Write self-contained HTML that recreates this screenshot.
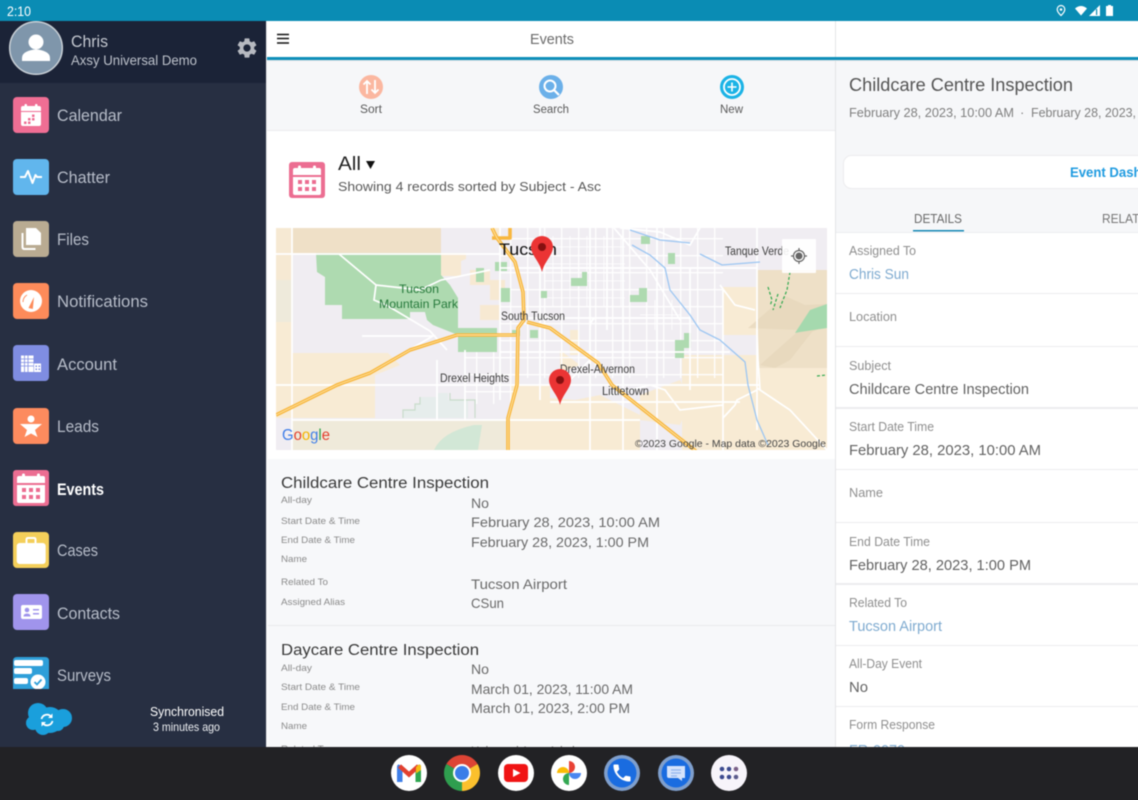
<!DOCTYPE html>
<html lang="en"><head><meta charset="utf-8"><title>Events</title>
<style>
html,body{margin:0;padding:0;width:1138px;height:800px;overflow:hidden;background:#fff}
#w{position:relative;width:1138px;height:800px;overflow:hidden}
svg{display:block;position:absolute;left:-4px;top:-4px;filter:blur(.4px)}
text{font-family:"Liberation Sans",sans-serif;white-space:pre}
.m{font-size:17px;fill:#b6bcc8}
.lb{font-size:13px;fill:#8f8f8f}
.v{font-size:15px;fill:#636363}
.lk{font-size:15px;fill:#7fabd0}
.sl{font-size:9.5px;fill:#8a8a8a}
.sv{font-size:14px;fill:#6a6a6a}
.st{font-size:15.5px;fill:#3a3a3a}
.g{font-size:11.5px;fill:#3c3c3c}
.r{fill:none;stroke:#fff}
</style></head><body><div id="w">
<svg width="1146" height="808" viewBox="-4 -4 1146 808" xmlns="http://www.w3.org/2000/svg">
<defs>
<clipPath id="mc"><rect x="276" y="228" width="551" height="222"/></clipPath>
<pattern id="grid" width="17" height="17" patternUnits="userSpaceOnUse"><path d="M0 .6H17M.6 0V17" stroke="#fff" stroke-width="1.300" fill="none"/></pattern>
<pattern id="fine" width="8.500" height="8.500" patternUnits="userSpaceOnUse"><path d="M0 .4H8.500M.4 0V8.500" stroke="#fff" stroke-width=".8" fill="none"/></pattern>
<g id="cal"><rect width="36" height="36" rx="3" fill="#ec6e92"/><path d="M4 13V8q0-2 2-2h24q2 0 2 2v5z" fill="#fff"/><rect x="9" y="3.500" width="3" height="4" rx="1.500" fill="#fff"/><rect x="24" y="3.500" width="3" height="4" rx="1.500" fill="#fff"/><path d="M4 15h28v16q0 2-2 2H6q-2 0-2-2z" fill="#fff"/><g fill="#ec6e92"><rect x="9" y="18" width="4" height="4"/><rect x="16" y="18" width="4" height="4"/><rect x="23" y="18" width="4" height="4"/><rect x="9" y="25" width="4" height="4"/><rect x="16" y="25" width="4" height="4"/><rect x="23" y="25" width="4" height="4"/></g></g>
</defs>

<!-- main backgrounds -->
<rect x="-4" y="-4" width="1146" height="808" fill="#fff"/>
<rect x="267" y="60" width="568" height="70" fill="#f6f7f9"/>
<rect x="267" y="130" width="568" height="1" fill="#ebecee"/>
<rect x="836" y="60" width="306" height="172" fill="#f6f7f9"/>
<rect x="835" y="21" width="1" height="726" fill="#e4e5e7"/>
<rect x="267" y="57" width="875" height="3" fill="#0f8fb9"/>
<rect x="267" y="60" width="875" height="1" fill="#dfe3e6"/>

<!-- header -->
<path d="M277 34.500h12M277 38.500h12M277 43h12" stroke="#111" stroke-width="1.600"/>
<text x="530" y="44" font-size="15" fill="#6b6b6b" textLength="44" lengthAdjust="spacingAndGlyphs">Events</text>

<!-- toolbar -->
<circle cx="371" cy="87" r="12" fill="#fbb7a0"/>
<path d="M367 94V81M363.500 84.500L367 81l3.500 3.500M375 80v13M371.500 89.500L375 93l3.500-3.500" stroke="#fff" stroke-width="1.800" fill="none"/>
<circle cx="551" cy="87" r="12" fill="#6bb0e9"/>
<circle cx="550" cy="86" r="5.500" fill="none" stroke="#fff" stroke-width="2"/><path d="M554 90l5 5" stroke="#fff" stroke-width="2.200"/>
<circle cx="732" cy="87" r="12" fill="#1bb3e6"/>
<circle cx="732" cy="87" r="8" fill="none" stroke="#fff" stroke-width="1.800"/><path d="M732 82.500v9M727.500 87h9" stroke="#fff" stroke-width="1.600"/>
<text x="360" y="113" font-size="11.500" fill="#5a5a5a" textLength="22" lengthAdjust="spacingAndGlyphs">Sort</text>
<text x="533" y="113" font-size="11.500" fill="#5a5a5a" textLength="36" lengthAdjust="spacingAndGlyphs">Search</text>
<text x="720" y="113" font-size="11.500" fill="#5a5a5a" textLength="23" lengthAdjust="spacingAndGlyphs">New</text>

<!-- list header -->
<use href="#cal" x="289" y="162"/>
<text x="338" y="170" font-size="19" fill="#222" textLength="23" lengthAdjust="spacingAndGlyphs">All</text>
<path d="M366 161h9l-4.500 8z" fill="#111"/>
<text x="338" y="191" font-size="13" fill="#5a5a5a" textLength="263" lengthAdjust="spacingAndGlyphs">Showing 4 records sorted by Subject - Asc</text>

<!-- map -->
<g clip-path="url(#mc)">
<rect x="276" y="228" width="551" height="222" fill="#f0edf2"/>
<rect x="276" y="228" width="16" height="52" fill="#f6e9d3"/>
<rect x="276" y="280" width="16" height="42" fill="#eeeadb"/>
<rect x="276" y="322" width="16" height="96" fill="#f8ebd4"/>
<rect x="292" y="228" width="149" height="25" fill="#efe0c7"/>
<path d="M292 353H388L400 365 375 375V418H292z" fill="#f8ebd4"/>
<rect x="276" y="418" width="16" height="32" fill="#f0edf2"/>
<rect x="292" y="420" width="191" height="30" fill="#efeada"/>
<path d="M483 420H510V450H483z" fill="#efeada"/>
<path d="M434 450q8-18 40-25l8 0-4 25z" fill="#d2e7d6"/>
<path d="M403 418v-8h12v-6h5v-7h18v-4h10v7h20v18z" fill="#e6edec"/>
<path d="M292 420H483M292 420V450M403 418v-8h12v-6h5v-7M450 393v7h25v18" fill="none" stroke="#c9dccb" stroke-width="1.200"/>
<path d="M441 253h25v6l-5 2v15h-20zM470 270h20v15h-20zM480 305h20v15h-20zM441 260l-20 3v10h20z" fill="#f7e9d2"/>
<path d="M490 280h15v20h-15zM492 228h8v8h-8z" fill="#f7e9d2"/>
<path d="M316 253H441V275L450 285 458 298V328H497V352H458V335L433 325 427 320 425 312H410V319H342V305H325V277L317 272z" fill="#aedab0"/>
<path d="M757 270H827V368H757z" fill="#eee0c7"/>
<path d="M723 287H757V335H723zM757 368H827V450H757zM682 355H757V450H682z" fill="#f8ebd4"/>
<path d="M550 398L575 400 600 395 640 415V450H550zM510 385H550V450H510zM640 395L680 380 690 400 680 425 640 420zM560 350l20 15-20 8zM570 330h8v25h-8z" fill="#f8ebd4"/>
<path d="M795 334L827 304V325L812 332 790 360 775 368 760 365zM748 328L785 296 805 305 827 304 827 325 800 330z" fill="#e6d5ba" opacity=".7"/>
<path d="M795 333L810 310 827 304V328L800 332z" fill="#a5d9ae"/>
<!-- grid city -->
<rect x="500" y="228" width="223" height="150" fill="url(#grid)"/>
<rect x="545" y="236" width="80" height="70" fill="url(#fine)"/>
<rect x="465" y="352" width="50" height="52" fill="url(#grid)"/>
<rect x="640" y="300" width="40" height="30" fill="url(#fine)"/>
<!-- parks over grid -->
<path d="M495 262h12v9h-12zM476 268h8v14h-8zM500 288h10v14h-10zM630 295h9v-7h8v14h-17zM668 253h7v11h-7zM641 236h9v8h-9zM675 340h9v-7h7v15h-7v10h-9zM540 291h7v7h-7zM571 286h16v-14h-5v6h-11zM530 338h8v-8h-8zM512 330h8v6h-8z" fill="#aedab0"/>
<!-- major streets -->
<g class="r" stroke-width="1.700">
<path d="M292 228V450M276 254H500M276 385H760M316 385H517M292 420H640"/>
<path d="M500 268H757M517 318H690M500 352H730M550 402H740"/>
<path d="M590 228V450M607 228V330M623 228V450M657 228V450M690 268V390M723 290V450M757 228V430"/>
<path d="M540 228V400M500 228V400M465 350V420M437 360V420"/>
<path d="M339 254L376 285 374 300 388 306 430 331 447 350M376 285L420 290 441 280 490 270M362 336H433L392 360"/>
<path d="M597 318Q590 318 590 330M757 390L737 400 735 405 723 418M757 388L790 410 827 450M610 395L650 385 665 390 680 410 723 405"/>
<path d="M700 228L690 245 660 232 620 228M560 390L590 360M757 330L758 360 760 390"/>
<path d="M614 228L650 270 680 320M720 285L735 305 755 310"/>
</g>
<!-- water -->
<g fill="none" stroke="#9cc6f2" stroke-width="1.300">
<path d="M630 230L660 240 690 243M632 245L650 255 665 268 670 290 690 315 700 330 720 340 745 362 748 385 757 420 768 445"/>
<path d="M700 254L722 265 760 262"/>
</g>
<g fill="none" stroke="#2fa84f" stroke-width="1.200" stroke-dasharray="3 2"><path d="M790 272L787 290 783 300 780 308M768 287L772 300 770 306M778 294L773 310M817 376L827 375"/></g>
<!-- highways -->
<g fill="none" stroke-linejoin="round">
<g stroke="#f8b73f" stroke-width="3.600">
<path d="M276 415L337 385 370 373 410 350 457 335 516 335"/>
<path d="M492 228L497 238 515 262 523 292 524 320 518 328 517 385 508 418 508 450"/>
<path d="M510 228V238L492 238"/>
<path d="M527 322L550 328 598 363 612 385 697 452"/>
</g>
<g stroke="#fde3a6" stroke-width=".9">
<path d="M276 415L337 385 370 373 410 350 457 335 516 335"/>
<path d="M492 228L497 238 515 262 523 292 524 320 518 328 517 385 508 418 508 450"/>
<path d="M527 322L550 328 598 363 612 385 697 452"/>
</g>
</g>
<!-- labels -->
<text x="499" y="255" font-size="17" fill="#111" textLength="58" lengthAdjust="spacingAndGlyphs">Tucson</text>
<text x="399" y="293" font-size="12" fill="#277a3c" textLength="40" lengthAdjust="spacingAndGlyphs">Tucson</text>
<text x="379" y="308" font-size="12" fill="#277a3c" textLength="79" lengthAdjust="spacingAndGlyphs">Mountain Park</text>
<text class="g" x="501" y="320" textLength="64" lengthAdjust="spacingAndGlyphs">South Tucson</text>
<text class="g" x="440" y="382" textLength="69" lengthAdjust="spacingAndGlyphs">Drexel Heights</text>
<text class="g" x="560" y="373" textLength="75" lengthAdjust="spacingAndGlyphs">Drexel-Alvernon</text>
<text class="g" x="602" y="395" textLength="47" lengthAdjust="spacingAndGlyphs">Littletown</text>
<text class="g" x="725" y="255" textLength="64" lengthAdjust="spacingAndGlyphs">Tanque Verde</text>
<text x="635" y="447" font-size="10.500" fill="#444" textLength="191" lengthAdjust="spacingAndGlyphs">©2023 Google - Map data ©2023 Google</text>
<text x="282" y="440" font-size="15.500" textLength="48" lengthAdjust="spacingAndGlyphs"><tspan fill="#3f7ee8">G</tspan><tspan fill="#e3402f">o</tspan><tspan fill="#f5b400">o</tspan><tspan fill="#3f7ee8">g</tspan><tspan fill="#2ca24c">l</tspan><tspan fill="#e3402f">e</tspan></text>
<!-- locate btn -->
<rect x="782" y="239" width="34" height="34" rx="1" fill="#fff" opacity=".9"/>
<circle cx="799" cy="256" r="5.500" fill="none" stroke="#666" stroke-width="1.200"/><circle cx="799" cy="256" r="3.500" fill="#666"/>
<path d="M799 248v3M799 261v3M791 256h3M804 256h3" stroke="#666" stroke-width="1.200"/>
<!-- pins -->
<path d="M542 272C540 262 531 255 531 247A11 11 0 0 1 553 247C553 255 544 262 542 272Z" fill="#eb3434"/><circle cx="542" cy="247" r="4" fill="#861010"/>
<path d="M560 405C558 395 549 388 549 380A11 11 0 0 1 571 380C571 388 562 395 560 405Z" fill="#eb3434"/><circle cx="560" cy="380" r="4" fill="#861010"/>
</g>

<!-- list items -->
<rect x="268" y="459" width="567" height="288" fill="#f7f8fa"/>
<rect x="268" y="625" width="567" height="1" fill="#e9eaec"/>
<text class="st" x="281" y="488" textLength="208" lengthAdjust="spacingAndGlyphs">Childcare Centre Inspection</text>
<text class="sl" x="281" y="503" textLength="31" lengthAdjust="spacingAndGlyphs">All-day</text>
<text class="sl" x="281" y="524" textLength="79" lengthAdjust="spacingAndGlyphs">Start Date &amp; Time</text>
<text class="sl" x="281" y="543" textLength="74" lengthAdjust="spacingAndGlyphs">End Date &amp; Time</text>
<text class="sl" x="281" y="562" textLength="26" lengthAdjust="spacingAndGlyphs">Name</text>
<text class="sl" x="281" y="585" textLength="47" lengthAdjust="spacingAndGlyphs">Related To</text>
<text class="sl" x="281" y="605" textLength="64" lengthAdjust="spacingAndGlyphs">Assigned Alias</text>
<text class="sv" x="471" y="508" textLength="18" lengthAdjust="spacingAndGlyphs">No</text>
<text class="sv" x="471" y="527" textLength="189" lengthAdjust="spacingAndGlyphs">February 28, 2023, 10:00 AM</text>
<text class="sv" x="471" y="547" textLength="178" lengthAdjust="spacingAndGlyphs">February 28, 2023, 1:00 PM</text>
<text class="sv" x="471" y="589" textLength="96" lengthAdjust="spacingAndGlyphs">Tucson Airport</text>
<text class="sv" x="471" y="608" textLength="33" lengthAdjust="spacingAndGlyphs">CSun</text>
<text class="st" x="281" y="655" textLength="198" lengthAdjust="spacingAndGlyphs">Daycare Centre Inspection</text>
<text class="sl" x="281" y="671" textLength="31" lengthAdjust="spacingAndGlyphs">All-day</text>
<text class="sl" x="281" y="690" textLength="79" lengthAdjust="spacingAndGlyphs">Start Date &amp; Time</text>
<text class="sl" x="281" y="710" textLength="74" lengthAdjust="spacingAndGlyphs">End Date &amp; Time</text>
<text class="sl" x="281" y="729" textLength="26" lengthAdjust="spacingAndGlyphs">Name</text>
<text class="sl" x="281" y="752" textLength="47" lengthAdjust="spacingAndGlyphs">Related To</text>
<text class="sv" x="471" y="674" textLength="18" lengthAdjust="spacingAndGlyphs">No</text>
<text class="sv" x="471" y="694" textLength="162" lengthAdjust="spacingAndGlyphs">March 01, 2023, 11:00 AM</text>
<text class="sv" x="471" y="713" textLength="159" lengthAdjust="spacingAndGlyphs">March 01, 2023, 2:00 PM</text>
<text class="sv" x="471" y="756" textLength="110" lengthAdjust="spacingAndGlyphs">Universal Axsy Admin</text>

<!-- right panel -->
<text x="849" y="91" font-size="18" fill="#555" textLength="224" lengthAdjust="spacingAndGlyphs">Childcare Centre Inspection</text>
<text x="849" y="117" font-size="13" fill="#808080" textLength="165" lengthAdjust="spacingAndGlyphs">February 28, 2023, 10:00 AM</text>
<text x="1020" y="117" font-size="13" fill="#808080">·</text>
<text x="1031" y="117" font-size="13" fill="#808080" textLength="105" lengthAdjust="spacingAndGlyphs">February 28, 2023,</text>
<rect x="843.500" y="155.500" width="310" height="33" rx="8" fill="#fff" stroke="#ececee"/>
<text x="1070" y="177" font-size="14" font-weight="bold" fill="#1f9be0" textLength="108" lengthAdjust="spacingAndGlyphs">Event Dashboard</text>
<text x="914" y="223" font-size="13" fill="#6a6a6a" textLength="48" lengthAdjust="spacingAndGlyphs">DETAILS</text>
<text x="1102" y="223" font-size="13" fill="#777" textLength="54" lengthAdjust="spacingAndGlyphs">RELATED</text>
<rect x="913" y="230" width="51" height="1.500" fill="#1689b6"/>
<rect x="836" y="232" width="306" height="1" fill="#eceef0"/>
<g fill="#ececee">
<rect x="836" y="293" width="306" height="1"/><rect x="836" y="346" width="306" height="1"/><rect x="836" y="407" width="306" height="2"/><rect x="836" y="469" width="306" height="1"/><rect x="836" y="522" width="306" height="1"/><rect x="836" y="583" width="306" height="2"/><rect x="836" y="645" width="306" height="1"/><rect x="836" y="706" width="306" height="1"/>
</g>
<text class="lb" x="849" y="255" textLength="67" lengthAdjust="spacingAndGlyphs">Assigned To</text>
<text class="lk" x="849" y="279" textLength="60" lengthAdjust="spacingAndGlyphs">Chris Sun</text>
<text class="lb" x="849" y="321" textLength="48" lengthAdjust="spacingAndGlyphs">Location</text>
<text class="lb" x="849" y="370" textLength="42" lengthAdjust="spacingAndGlyphs">Subject</text>
<text class="v" x="849" y="394" textLength="180" lengthAdjust="spacingAndGlyphs">Childcare Centre Inspection</text>
<text class="lb" x="849" y="431" textLength="85" lengthAdjust="spacingAndGlyphs">Start Date Time</text>
<text class="v" x="849" y="455" textLength="192" lengthAdjust="spacingAndGlyphs">February 28, 2023, 10:00 AM</text>
<text class="lb" x="849" y="497" textLength="34" lengthAdjust="spacingAndGlyphs">Name</text>
<text class="lb" x="849" y="546" textLength="81" lengthAdjust="spacingAndGlyphs">End Date Time</text>
<text class="v" x="849" y="570" textLength="182" lengthAdjust="spacingAndGlyphs">February 28, 2023, 1:00 PM</text>
<text class="lb" x="849" y="607" textLength="58" lengthAdjust="spacingAndGlyphs">Related To</text>
<text class="lk" x="849" y="631" textLength="93" lengthAdjust="spacingAndGlyphs">Tucson Airport</text>
<text class="lb" x="849" y="668" textLength="73" lengthAdjust="spacingAndGlyphs">All-Day Event</text>
<text class="v" x="849" y="692" textLength="19" lengthAdjust="spacingAndGlyphs">No</text>
<text class="lb" x="849" y="729" textLength="86" lengthAdjust="spacingAndGlyphs">Form Response</text>
<text class="lk" x="849" y="755" textLength="56" lengthAdjust="spacingAndGlyphs">FR-0070</text>

<!-- sidebar -->
<rect x="-4" y="21" width="270" height="726" fill="#272f42"/>
<rect x="-4" y="21" width="270" height="62" fill="#1b2337"/>
<circle cx="36" cy="48" r="26.300" fill="#7f96ab" stroke="#c9d0d6" stroke-width="1.500"/>
<circle cx="36" cy="42" r="7.500" fill="#fff"/><path d="M22 61v-3q0-4 4-6 5-2.500 10-2.500t10 2.500q4 2 4 6v3z" fill="#fff"/>
<text x="71" y="47" font-size="17" fill="#c4c8d0" textLength="37" lengthAdjust="spacingAndGlyphs">Chris</text>
<text x="71" y="65" font-size="14" fill="#bcc1ca" textLength="126" lengthAdjust="spacingAndGlyphs">Axsy Universal Demo</text>
<path transform="translate(235 36)" fill="#b6b9c0" fill-rule="evenodd" d="M19.14 12.94c.04-.3.06-.61.06-.94 0-.32-.02-.64-.07-.94l2.03-1.58c.18-.14.23-.41.12-.61l-1.92-3.32c-.12-.22-.37-.29-.59-.22l-2.39.96c-.5-.38-1.03-.7-1.62-.94l-.36-2.54c-.04-.24-.24-.41-.48-.41h-3.84c-.24 0-.43.17-.47.41l-.36 2.54c-.59.24-1.13.57-1.62.94l-2.39-.96c-.22-.08-.47 0-.59.22L2.74 8.87c-.12.21-.08.47.12.61l2.03 1.58c-.05.3-.09.63-.09.94s.02.64.07.94l-2.03 1.58c-.18.14-.23.41-.12.61l1.92 3.32c.12.22.37.29.59.22l2.39-.96c.5.38 1.03.7 1.62.94l.36 2.54c.05.24.24.41.48.41h3.84c.24 0 .44-.17.47-.41l.36-2.54c.59-.24 1.13-.56 1.62-.94l2.39.96c.22.08.47 0 .59-.22l1.92-3.32c.12-.22.07-.47-.12-.61l-2.01-1.58zM12 15.6c-1.98 0-3.6-1.62-3.6-3.6s1.62-3.6 3.6-3.6 3.6 1.62 3.6 3.6-1.62 3.6-3.6 3.6z"/>

<!-- Calendar -->
<g transform="translate(13 97)"><rect width="36" height="36" rx="4" fill="#ef6e94"/>
<path d="M8 14v-3q0-2 2-2h16q2 0 2 2v3z" fill="#fff"/><rect x="11.500" y="7" width="2.500" height="4" rx="1" fill="#fff"/><rect x="22" y="7" width="2.500" height="4" rx="1" fill="#fff"/><path d="M8 15h20v12q0 2-2 2H10q-2 0-2-2z" fill="#fff"/>
<g fill="#ef6e94"><rect x="19" y="17.500" width="2.500" height="2.500"/><rect x="15" y="21" width="2.500" height="2.500"/><rect x="19" y="21" width="2.500" height="2.500"/><rect x="11" y="24.500" width="2.500" height="2.500"/><rect x="15" y="24.500" width="2.500" height="2.500"/></g></g>
<text class="m" x="57" y="121" textLength="65" lengthAdjust="spacingAndGlyphs">Calendar</text>
<!-- Chatter -->
<g transform="translate(13 159)"><rect width="36" height="36" rx="4" fill="#61b6ed"/><path d="M7 18h5l3-6 4.500 12 3-8 1.500 2h5" fill="none" stroke="#fff" stroke-width="2" stroke-linejoin="round"/></g>
<text class="m" x="57" y="183" textLength="53" lengthAdjust="spacingAndGlyphs">Chatter</text>
<!-- Files -->
<g transform="translate(13 221)"><rect width="36" height="36" rx="4" fill="#b9ab92"/><path d="M13 7h10l5 5v12H13z" fill="#fff"/><path d="M9.500 12v14q0 2 2 2h11" fill="none" stroke="#fff" stroke-width="2"/></g>
<text class="m" x="57" y="245" textLength="32" lengthAdjust="spacingAndGlyphs">Files</text>
<!-- Notifications -->
<g transform="translate(13 283)"><rect width="36" height="36" rx="4" fill="#fd8b5a"/><circle cx="18" cy="18" r="11" fill="#fff"/><path d="M15.500 25L21 14 19.800 26z" fill="#fd8b5a"/><path d="M10 19a8 8 0 0 1 4-7" fill="none" stroke="#fd8b5a" stroke-width="1"/></g>
<text class="m" x="57" y="307" textLength="91" lengthAdjust="spacingAndGlyphs">Notifications</text>
<!-- Account -->
<g transform="translate(13 345)"><rect width="36" height="36" rx="4" fill="#7f8de2"/><rect x="8" y="10.500" width="12.500" height="16.500" fill="#fff"/><rect x="21" y="18.500" width="7" height="8.500" fill="#fff"/><g stroke="#7f8de2" stroke-width=".8"><path d="M11.500 10.500v16.500M15 10.500v16.500M8 14h12.500M8 17.500h12.500M8 21h12.500"/></g><g fill="#7f8de2"><rect x="22.500" y="20.500" width="1.500" height="1.500"/><rect x="25.500" y="20.500" width="1.500" height="1.500"/><rect x="22.500" y="23.500" width="1.500" height="1.500"/><rect x="25.500" y="23.500" width="1.500" height="1.500"/></g></g>
<text class="m" x="57" y="370" textLength="60" lengthAdjust="spacingAndGlyphs">Account</text>
<!-- Leads -->
<g transform="translate(13 408)"><rect width="36" height="36" rx="4" fill="#fd8b5e"/><circle cx="18" cy="11" r="3.500" fill="#fff"/><path d="M7 16h22l-7 6 2.500 7-6.500-3.500L11.500 29l2.500-7z" fill="#fff"/></g>
<text class="m" x="57" y="432" textLength="42" lengthAdjust="spacingAndGlyphs">Leads</text>
<!-- Events -->
<use href="#cal" x="13" y="470"/>
<text x="57" y="495" font-size="16.500" font-weight="bold" fill="#fff" textLength="47" lengthAdjust="spacingAndGlyphs">Events</text>
<!-- Cases -->
<g transform="translate(13 532)"><rect width="36" height="36" rx="4" fill="#f4cf5a"/><path d="M13.500 11V7.500q0-1.500 1.500-1.500h6q1.500 0 1.500 1.500V11" fill="none" stroke="#fff" stroke-width="2"/><rect x="3.700" y="11" width="29" height="21" rx="3" fill="#fff"/></g>
<text class="m" x="57" y="556" textLength="41" lengthAdjust="spacingAndGlyphs">Cases</text>
<!-- Contacts -->
<g transform="translate(13 594)"><rect width="36" height="36" rx="4" fill="#a094ec"/><rect x="8" y="11" width="21" height="14" rx="2" fill="#fff"/><circle cx="14" cy="16" r="2.300" fill="#a094ec"/><path d="M10.500 22.500q0-3 3.500-3t3.500 3z" fill="#a094ec"/><rect x="20" y="15" width="6" height="1.500" fill="#a094ec"/><rect x="20" y="19" width="6" height="1.500" fill="#a094ec"/></g>
<text class="m" x="57" y="619" textLength="63" lengthAdjust="spacingAndGlyphs">Contacts</text>
<!-- Surveys -->
<path d="M13 661q0-4 4-4h28q4 0 4 4v28H13z" fill="#2f9fd9"/>
<rect x="14" y="660" width="29" height="6" rx="2" fill="#fff"/><rect x="14" y="668" width="18" height="6" rx="2" fill="#fff"/><rect x="14" y="678" width="14" height="6" rx="2" fill="#fff"/>
<circle cx="38" cy="682" r="7.500" fill="#fff"/><path d="M34.500 682l2.500 2.500 4.500-5" fill="none" stroke="#2f9fd9" stroke-width="1.800"/>
<rect x="-4" y="689" width="270" height="58" fill="#272f42"/>
<text class="m" x="57" y="681" textLength="54" lengthAdjust="spacingAndGlyphs">Surveys</text>
<!-- Cloud -->
<g fill="#1a9fdc"><circle cx="38" cy="713" r="10"/><circle cx="50" cy="720" r="13"/><circle cx="33" cy="723" r="7"/><circle cx="43" cy="727" r="8"/><circle cx="63" cy="718" r="9"/><circle cx="58" cy="725" r="6"/></g>
<g fill="none" stroke="#fff" stroke-width="1.800"><path d="M41.500 719a5.500 5.500 0 0 1 9.500-2.500M52.500 721a5.500 5.500 0 0 1-9.500 2.500"/></g>
<path d="M52.500 713.500v4.500h-4.500zM41.500 726.500v-4.500h4.500z" fill="#fff"/>
<text x="150" y="716" font-size="13" fill="#fff" textLength="74" lengthAdjust="spacingAndGlyphs">Synchronised</text>
<text x="153" y="731" font-size="12" fill="#eef0f3" textLength="67" lengthAdjust="spacingAndGlyphs">3 minutes ago</text>
<rect x="266" y="21" width="1" height="726" fill="#e8e9ea"/>

<!-- status bar -->
<rect x="-4" y="-4" width="1146" height="25" fill="#0a8cb4"/>
<text x="7" y="16" font-size="14" style="fill:#fff" textLength="24" lengthAdjust="spacingAndGlyphs">2:10</text>
<path d="M1061 5.500a3.800 3.800 0 0 0-3.800 3.800c0 2.800 3.800 6.200 3.800 6.200s3.800-3.400 3.800-6.200a3.800 3.800 0 0 0-3.800-3.800z" fill="none" stroke="#fff" stroke-width="1.200"/><circle cx="1061" cy="9.500" r="1.300" fill="#fff"/>
<path d="M1075 8.500Q1081 3.500 1087 8.500L1081 15.500z" fill="#fff"/>
<path d="M1100 5v11h-11z" fill="#fff"/><rect x="1096" y="9" width="1.200" height="6" fill="#0a8cb4"/>
<path d="M1108 5h3v1h2v10h-7V6h2z" fill="#fff"/>

<!-- nav -->
<rect x="-4" y="747" width="1146" height="57" fill="#222225"/>
<!-- Gmail -->
<circle cx="409" cy="773" r="18" fill="#fff"/>
<path d="M397 782v-15q0-2.500 2-2.500l3.500 2.500V782z" fill="#3f7fe8"/><path d="M421 782v-15q0-2.500-2-2.500l-3.500 2.500V782z" fill="#2fa650"/>
<path d="M399.500 766L409 774.500l9.500-8.500" fill="none" stroke="#e2402f" stroke-width="4.500"/><path d="M416 767l3-2.500q2 0 2 2.500v3l-5 3.500z" fill="#f5bc13"/>
<!-- Chrome -->
<g transform="translate(462 773)"><path d="M0 0L-15.600-9A18 18 0 0 1 15.600-9Z" fill="#dd4435"/><path d="M0 0L15.600-9A18 18 0 0 1 0 18Z" fill="#fbc02d"/><path d="M0 0L0 18A18 18 0 0 1-15.600-9Z" fill="#2f9e4f"/><circle r="9" fill="#fff"/><circle r="7" fill="#3b7de8"/></g>
<!-- YouTube -->
<circle cx="516" cy="773" r="18" fill="#fff"/><rect x="504" y="764" width="24" height="18" rx="4" fill="#f01414"/><path d="M513 769l7.500 4-7.500 4z" fill="#fff"/>
<!-- Photos -->
<circle cx="569" cy="773" r="18" fill="#fff"/>
<path d="M569 773H557A6 6 0 0 1 569 773Z" fill="#fbbc05"/><path d="M569 773V761A6 6 0 0 1 569 773Z" fill="#e94235"/><path d="M569 773H581A6 6 0 0 1 569 773Z" fill="#4a86f0"/><path d="M569 773V785A6 6 0 0 1 569 773Z" fill="#34a853"/>
<!-- Phone -->
<circle cx="622" cy="773" r="18" fill="#7f9fcd"/><circle cx="622" cy="773" r="14.500" fill="#1a6ce0"/>
<path transform="translate(610.600 761.600) scale(.95)" fill="#fff" d="M6.620 10.790c1.440 2.830 3.760 5.140 6.590 6.590l2.200-2.200c.27-.27.67-.36 1.020-.24 1.120.37 2.330.57 3.570.57.55 0 1 .45 1 1V20c0 .55-.45 1-1 1-9.390 0-17-7.610-17-17 0-.55.45-1 1-1h3.500c.55 0 1 .45 1 1 0 1.250.2 2.450.57 3.570.11.350.03.740-.25 1.020l-2.200 2.200z"/>
<!-- Messages -->
<circle cx="676" cy="773" r="18" fill="#7f9fcd"/><circle cx="676" cy="773" r="14.500" fill="#1a6ce0"/>
<path d="M667 766h18v12h-3v3l-4-3h-9q-2 0-2-2z" fill="#d5e3fb"/><path d="M671 770h10M671 773h10M671 776h6" stroke="#8fb3ee" stroke-width="1.200"/>
<!-- Apps -->
<circle cx="729" cy="773" r="18" fill="#f7f4fa"/>
<g fill="#3c4a8f"><circle cx="722" cy="769" r="2.300"/><circle cx="729" cy="769" r="2.300"/><circle cx="722" cy="777" r="2.300"/><circle cx="729" cy="777" r="2.300"/><circle cx="736" cy="777" r="2.300" fill="#5c5c8c"/><circle cx="736" cy="769" r="2.300" fill="#7a6088"/></g>
</svg>
</div></body></html>
